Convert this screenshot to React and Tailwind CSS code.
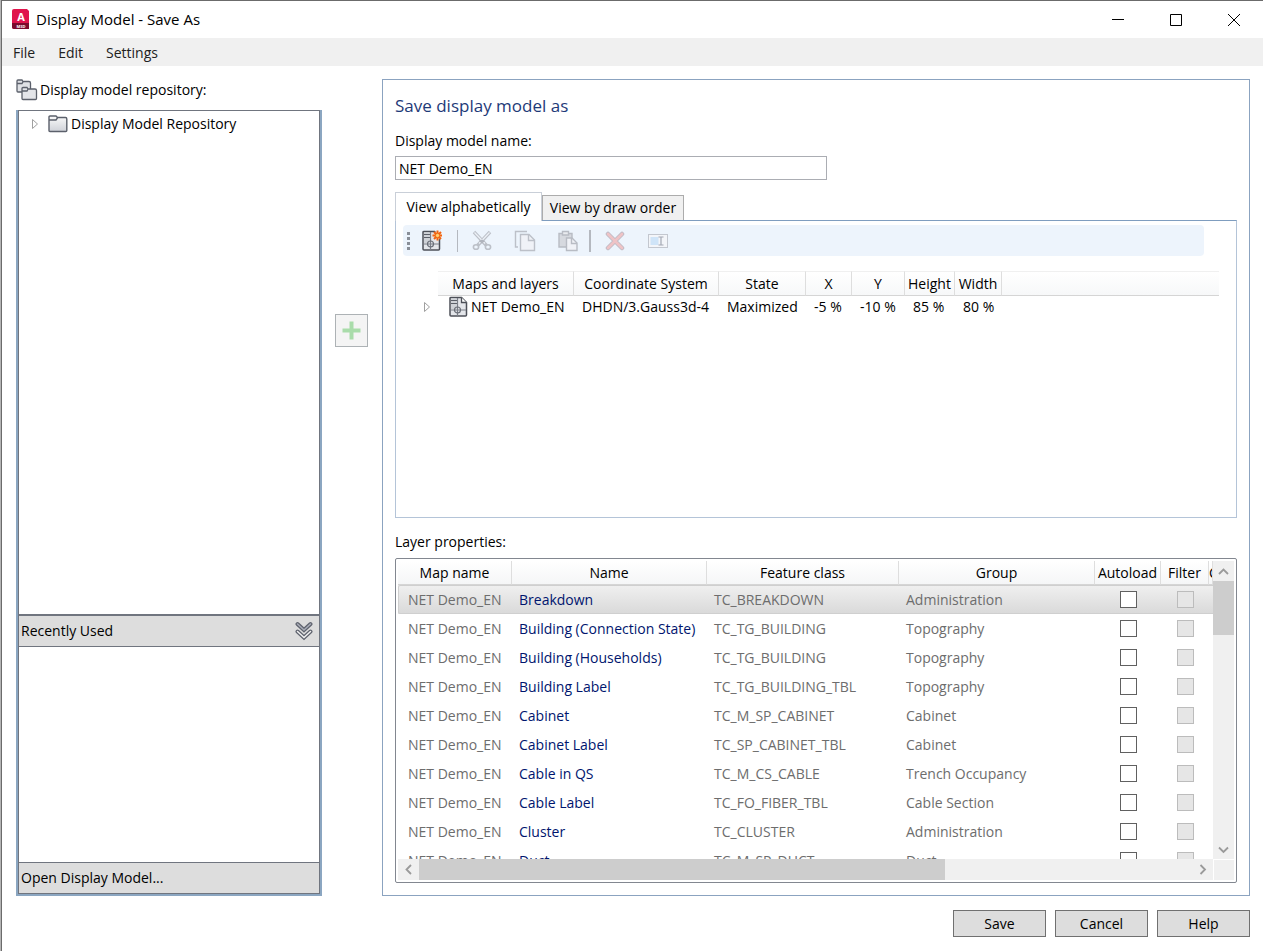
import React from 'react';

const mapColumns = ['Maps and layers', 'Coordinate System', 'State', 'X', 'Y', 'Height', 'Width'];

const layers = [
  ['Breakdown', 'TC_BREAKDOWN', 'Administration'],
  ['Building (Connection State)', 'TC_TG_BUILDING', 'Topography'],
  ['Building (Households)', 'TC_TG_BUILDING', 'Topography'],
  ['Building Label', 'TC_TG_BUILDING_TBL', 'Topography'],
  ['Cabinet', 'TC_M_SP_CABINET', 'Cabinet'],
  ['Cabinet Label', 'TC_SP_CABINET_TBL', 'Cabinet'],
  ['Cable in QS', 'TC_M_CS_CABLE', 'Trench Occupancy'],
  ['Cable Label', 'TC_FO_FIBER_TBL', 'Cable Section'],
  ['Cluster', 'TC_CLUSTER', 'Administration'],
  ['Duct', 'TC_M_SP_DUCT', 'Duct'],
];

const Expander = () => (
  <svg className="block" width="8" height="12" viewBox="0 0 8 12" fill="#fff" stroke="#a0a0a0">
    <path d="M1.5 1.5 L6.5 6 L1.5 10.5 Z" />
  </svg>
);

const Folder = () => (
  <svg className="shrink-0" width="20" height="18" viewBox="0 0 20 18">
    <defs>
      <linearGradient id="folder" x1="0" y1="0" x2="0" y2="1">
        <stop offset="0" stopColor="#fafafa" />
        <stop offset="1" stopColor="#cfd2d8" />
      </linearGradient>
    </defs>
    <path d="M1 15.5 V2 Q1 1 2 1 H8 L9.5 2.5 H17.5 Q18.8 2.5 18.8 4 V15.5 Q18.8 16.5 17.8 16.5 H2 Q1 16.5 1 15.5 Z" fill="url(#folder)" stroke="#5b606b" strokeWidth="1.4" />
    <path d="M1 5 H8 L9.5 2.8" fill="none" stroke="#5b606b" strokeWidth="1.4" />
  </svg>
);

const Folders = () => (
  <svg className="shrink-0" width="22" height="22" viewBox="0 0 22 22" stroke="#5b606b" strokeWidth="1.3">
    <path d="M1 12 V2 Q1 1 2 1 H6 L7 2.5 H13 Q14.5 2.5 14.5 4 V13 H2 Q1 13 1 12 Z" fill="#dfe1e5" />
    <path d="M1 4.5 H6 L7 2.7" fill="none" />
    <path d="M6 19.5 V9.5 Q6 8.5 7 8.5 H11 L12 10 H19 Q20.5 10 20.5 11.5 V19.5 Q20.5 20.5 19.5 20.5 H7 Q6 20.5 6 19.5 Z" fill="#e3e5e9" />
    <path d="M6 12 H11 L12 10.2" fill="none" />
  </svg>
);

const MapSheet = ({ fresh = false }) => (
  <svg className="shrink-0" width="20" height="22" viewBox="0 0 20 22" fill="none">
    <path d="M1 2 Q1 1.5 2 1.5 H12.5 L17.5 6.5 V19 Q17.5 20 16.5 20 H2 Q1 20 1 19 Z" fill="#e4e6ea" stroke="#4d5058" strokeWidth="1.5" />
    <path d="M2 2.5 H7.5 V13 H2 Z" fill="#cfd2d7" />
    {!fresh && <path d="M12.5 1.5 V6.5 H17.5" fill="#fff" stroke="#4d5058" strokeWidth="1.3" />}
    <path d="M2 4.5 H8 M2 7.5 H8" stroke="#5b5f68" />
    <path d="M8.5 2 V20 M2 14 H17" stroke="#7b7f88" strokeWidth="1.2" />
    <circle cx="8.5" cy="14" r="3" stroke="#6b6f78" strokeWidth="1.2" />
    {fresh && (
      <g>
        <circle cx="15.5" cy="5.5" r="4" fill="#ffe3cc" />
        <path d="M15.5 0.5 V10.5 M10.5 5.5 H20 M12 2 L19 9 M19 2 L12 9" stroke="#ef6412" strokeWidth="2" />
        <circle cx="15.5" cy="5.5" r="2.2" fill="#ffd070" stroke="#ef6412" />
      </g>
    )}
  </svg>
);

const Cut = () => (
  <svg width="20" height="22" viewBox="0 0 20 22" fill="none" stroke="#bcc0c8">
    <path d="M2 2 L14.5 15.5 M18 2 L5.5 15.5" strokeWidth="3.4" />
    <path d="M2.5 2.5 L13 13.5 M17.5 2.5 L7 13.5" stroke="#edf1f7" strokeWidth="1.2" />
    <path d="M7 11 L10 9.5 L13 11 L10 13.5 Z" fill="#b0b4bd" stroke="none" />
    <ellipse cx="4" cy="17" rx="2.6" ry="2.3" strokeWidth="1.6" />
    <ellipse cx="16" cy="17" rx="2.6" ry="2.3" strokeWidth="1.6" />
  </svg>
);

const Copy = () => (
  <svg width="22" height="22" viewBox="0 0 22 22" fill="none" stroke="#bcc0c8" strokeWidth="1.4">
    <path d="M4 17 H1.5 V1.5 H13" />
    <path d="M6.5 4.5 H15 L20.5 10 V20.5 H6.5 Z" fill="#f0f2f7" />
    <path d="M14.5 4.5 V10.5 H20.5" />
  </svg>
);

const Paste = () => (
  <svg width="20" height="22" viewBox="0 0 20 22" fill="none" stroke="#b8bcc4" strokeWidth="1.4">
    <path d="M1 3.500 H14 V17 H1 Z" fill="#d6d9df" />
    <path d="M4.5 1.5 H10.5 V5 H4.5 Z" fill="#e9ebef" />
    <path d="M8.5 8 H14 L19 13 V20.5 H8.5 Z" fill="#f0f2f7" />
    <path d="M13.5 8 V13.5 H19" />
  </svg>
);

const Delete = () => (
  <svg width="20" height="20" viewBox="0 0 20 20" fill="none" strokeLinecap="round">
    <path d="M3 3 L17 17 M17 3 L3 17" stroke="#c0bcc6" strokeWidth="4.5" />
    <path d="M3 3 L17 17 M17 3 L3 17" stroke="#efc3c6" strokeWidth="2.6" />
  </svg>
);

const Rename = () => (
  <svg width="20" height="16" viewBox="0 0 20 16" fill="none">
    <rect x="0.5" y="1.5" width="19" height="13" fill="#f3f5f9" stroke="#c3c7cf" />
    <rect x="2.5" y="4" width="8" height="8" fill="#cfe4f8" />
    <path d="M10.5 4 H15.5 M10.5 12 H15.5 M13 4 V12" stroke="#a3a8b3" strokeWidth="1.2" />
  </svg>
);

const Chevron = ({ d }) => (
  <svg width="11" height="11" viewBox="0 0 11 11" fill="none" stroke="#9a9a9a" strokeWidth="1.8">
    <path d={d} />
  </svg>
);

const ToolButton = ({ label, disabled = true, children }) => (
  <button type="button" aria-label={label} disabled={disabled} className="flex w-[43px] items-center justify-center">
    {children}
  </button>
);

const TitleBar = () => (
  <header className="flex h-[37px] items-center justify-between bg-white">
    <div className="flex items-center gap-1.5 pl-[9px]">
      <svg width="19" height="20" viewBox="0 0 19 20">
        <path d="M1 2 Q1 0 3 0 H16 L18 2 V20 H3 Q1 20 1 18 Z" fill="#e0144c" />
        <path d="M1 14 H18 V20 H3 Q1 20 1 18 Z" fill="#7c0a2c" />
        <text x="10" y="11.5" fontSize="11" fontWeight="700" fill="#fff" textAnchor="middle">A</text>
        <text x="10" y="18.5" fontSize="4" fontWeight="700" fill="#fff" textAnchor="middle">M3D</text>
      </svg>
      <h1 className="text-[15px]">Display Model - Save As</h1>
    </div>
    <div className="flex">
      <button type="button" aria-label="Minimize" className="flex h-9 w-[58px] items-center justify-center">
        <svg width="12" height="12" viewBox="0 0 12 12" stroke="#000"><path d="M0 5.5 H12" /></svg>
      </button>
      <button type="button" aria-label="Maximize" className="flex h-9 w-[58px] items-center justify-center">
        <svg width="12" height="12" viewBox="0 0 12 12" stroke="#000" fill="none"><path d="M0.5 0.5 H11.5 V11.5 H0.5 Z" /></svg>
      </button>
      <button type="button" aria-label="Close" className="flex h-9 w-[58px] items-center justify-center">
        <svg width="12" height="12" viewBox="0 0 12 12" stroke="#000"><path d="M0 0 L12 12 M12 0 L0 12" /></svg>
      </button>
    </div>
  </header>
);

const RepositoryPanel = () => (
  <section className="flex w-[306px] shrink-0 flex-col">
    <h2 className="flex h-[22px] items-center gap-0.5">
      <Folders />
      Display model repository:
    </h2>
    <div className="mt-[9px] flex flex-1 flex-col border-x-2 border-b-2 border-[#8ba6c1]">
      <div className="flex-1 border border-[#70757f] pl-3">
        <div className="flex h-[25px] items-center">
          <button type="button" aria-label="Expand"><Expander /></button>
          <span className="ml-[9px] flex items-center gap-[3px]">
            <Folder />
            Display Model Repository
          </span>
        </div>
      </div>
      <button type="button" className="flex h-8 items-center justify-between border border-[#70757f] bg-[#dddddd] pl-0.5 pr-1.5">
        Recently Used
        <svg width="18" height="20" viewBox="0 0 18 20" fill="none" strokeLinecap="round">
          <path d="M2.5 3 L9 9 L15.5 3" stroke="#5f636e" strokeWidth="4" />
          <path d="M2.5 3 L9 9 L15.5 3" stroke="#a9adb8" strokeWidth="1.5" />
          <path d="M2.5 10.5 L9 16.5 L15.5 10.5" stroke="#5f636e" strokeWidth="4" />
          <path d="M2.5 10.5 L9 16.5 L15.5 10.5" stroke="#f0f0f0" strokeWidth="1.5" />
        </svg>
      </button>
      <div className="h-[215px] border-x border-[#70757f]" />
      <button type="button" className="h-8 border border-[#70757f] bg-[#dddddd] pl-0.5 text-left">
        Open Display Model...
      </button>
    </div>
  </section>
);

const MapTable = () => (
  <div className="pl-6 pr-[17px] pt-[15px]">
    <table className="w-full table-fixed border-separate border-spacing-0">
      <colgroup>
        <col className="w-[18px]" />
        <col className="w-[136px]" />
        <col className="w-[145px]" />
        <col className="w-[87px]" />
        <col className="w-[46px]" />
        <col className="w-[53px]" />
        <col className="w-[50px]" />
        <col className="w-[47px]" />
        <col />
      </colgroup>
      <thead>
        <tr className="h-[25px]">
          <td />
          {mapColumns.map((name) => (
            <th key={name} className="border-b border-r border-t border-b-[#d5d5d5] border-r-[#dedede] border-t-[#f0f0f0] bg-linear-to-b from-white to-[#f7f8f9] font-normal">
              {name}
            </th>
          ))}
          <td className="border-b border-t border-b-[#d5d5d5] border-t-[#f0f0f0] bg-linear-to-b from-white to-[#f7f8f9]" />
        </tr>
      </thead>
      <tbody>
        <tr className="h-[22px] whitespace-nowrap">
          <td><button type="button" aria-label="Expand" className="ml-[3px] block"><Expander /></button></td>
          <td>
            <span className="flex items-center gap-0.5 pl-[11px]">
              <MapSheet />
              NET Demo_EN
            </span>
          </td>
          <td className="pl-2">DHDN/3.Gauss3d-4</td>
          <td className="pl-2">Maximized</td>
          <td className="pl-2">-5 %</td>
          <td className="pl-2">-10 %</td>
          <td className="pl-2">85 %</td>
          <td className="pl-2">80 %</td>
          <td />
        </tr>
      </tbody>
    </table>
  </div>
);

const LayerTable = () => (
  <div className="flex h-[325px] flex-col rounded-xs border border-[#828790] p-0.5">
    <div className="flex min-h-0 flex-1">
      <div className="min-w-0 flex-1 overflow-hidden">
        <table className="w-full table-fixed border-separate border-spacing-0 whitespace-nowrap">
          <colgroup>
            <col className="w-[114px]" />
            <col className="w-[195px]" />
            <col className="w-[192px]" />
            <col />
            <col className="w-[66px]" />
            <col className="w-[48px]" />
            <col className="w-[4px]" />
          </colgroup>
          <thead>
            <tr className="h-6">
              {['Map name', 'Name', 'Feature class', 'Group', 'Autoload', 'Filter', 'C'].map((name) => (
                <th key={name} className="overflow-hidden border-b border-r border-b-[#d5d5d5] border-r-[#dedede] bg-linear-to-b from-white to-[#f5f6f7] p-0 font-normal">
                  {name}
                </th>
              ))}
            </tr>
          </thead>
          <tbody>
            {layers.map(([name, featureClass, group], i) => (
              <tr key={name} className={i === 0 ? 'h-[29px] bg-linear-to-b from-[#f0f0f0] to-[#d9d9d9] text-[#6d6d6d]' : 'h-[29px] text-[#6d6d6d]'}>
                <td className={i === 0 ? 'rounded-l-xs border-y border-l border-[#cfcfcf] p-0 pl-[9px]' : 'p-0 pl-2.5'}>NET Demo_EN</td>
                <td className={i === 0 ? 'border-y border-[#cfcfcf] p-0 pl-[7px] text-[#00156e]' : 'p-0 pl-[7px] text-[#00156e]'}>{name}</td>
                <td className={i === 0 ? 'border-y border-[#cfcfcf] p-0 pl-[7px]' : 'p-0 pl-[7px]'}>{featureClass}</td>
                <td className={i === 0 ? 'border-y border-[#cfcfcf] p-0 pl-[7px]' : 'p-0 pl-[7px]'}>{group}</td>
                <td className={i === 0 ? 'border-y border-[#cfcfcf] p-0' : 'p-0'}>
                  <input type="checkbox" aria-label={`Autoload ${name}`} className="mx-auto block size-[17px] appearance-none border border-[#606060] bg-white" />
                </td>
                <td className={i === 0 ? 'border-y border-[#cfcfcf] p-0' : 'p-0'}>
                  <input type="checkbox" disabled aria-label={`Filter ${name}`} className="mx-auto block size-[17px] appearance-none border border-[#bcbcbc] bg-[#e6e6e6]" />
                </td>
                <td className={i === 0 ? 'border-y border-[#cfcfcf] p-0' : 'p-0'} />
              </tr>
            ))}
          </tbody>
        </table>
      </div>
      <div className="flex w-[21px] flex-col bg-[#f0f0f0]">
        <button type="button" aria-label="Scroll up" className="flex h-5 items-center justify-center">
          <Chevron d="M1 8 L5.500 3.500 L10 8" />
        </button>
        <div className="h-[54px] bg-[#cdcdcd]" />
        <button type="button" aria-label="Scroll down" className="mt-auto flex h-5 items-center justify-center">
          <Chevron d="M1 3.500 L5.500 8 L10 3.500" />
        </button>
      </div>
    </div>
    <div className="flex h-[21px] bg-[#f0f0f0]">
      <button type="button" aria-label="Scroll left" className="flex w-[21px] items-center justify-center">
        <Chevron d="M8 1 L3.500 5.500 L8 10" />
      </button>
      <div className="flex-1">
        <div className="h-full w-[68%] bg-[#cdcdcd]" />
      </div>
      <button type="button" aria-label="Scroll right" className="flex w-[21px] items-center justify-center">
        <Chevron d="M3.500 1 L8 5.500 L3.500 10" />
      </button>
      <div className="w-[21px] border-l border-t border-white" />
    </div>
  </div>
);

const ModelPanel = () => (
  <section className="flex min-w-0 flex-1 flex-col border border-[#8ba3c0] px-3 pb-3">
    <h2 className="mt-[14px] text-[17px] leading-6 text-[#1e3a78]">Save display model as</h2>
    <label htmlFor="model-name" className="mt-[13px] leading-5">Display model name:</label>
    <input id="model-name" defaultValue="NET Demo_EN" className="mt-[5px] h-6 w-[432px] border border-[#abadb3] px-[3px] outline-none" />
    <div role="tablist" className="mt-3 flex items-end">
      <button type="button" role="tab" aria-selected="true" className="z-10 -mb-px h-[29px] w-[147px] border border-b-0 border-[#c9cfd8] bg-white">
        View alphabetically
      </button>
      <button type="button" role="tab" aria-selected="false" className="h-[25px] w-[142px] border border-b-0 border-[#acacac] bg-[#f0f0f0]">
        View by draw order
      </button>
    </div>
    <div role="tabpanel" className="flex-1 border border-[#b4c4d8] border-t-[#7f9dbf]">
      <div role="toolbar" className="ml-[7px] mr-8 mt-1 flex h-[31px] items-center rounded bg-[#edf4fc]">
        <svg className="ml-1" width="3" height="18" viewBox="0 0 3 18" fill="#8a8f98">
          <path d="M0 0 H3 V3 H0 Z M0 5 H3 V8 H0 Z M0 10 H3 V13 H0 Z M0 15 H3 V18 H0 Z" />
        </svg>
        <ToolButton label="New map" disabled={false}><MapSheet fresh /></ToolButton>
        <div className="ml-1 mr-0.5 h-[22px] w-px bg-[#b4b8bf]" />
        <ToolButton label="Cut"><Cut /></ToolButton>
        <ToolButton label="Copy"><Copy /></ToolButton>
        <ToolButton label="Paste"><Paste /></ToolButton>
        <div className="mr-0.5 h-[22px] w-0.5 bg-[#b4b8bf]" />
        <ToolButton label="Delete"><Delete /></ToolButton>
        <ToolButton label="Rename"><Rename /></ToolButton>
      </div>
      <MapTable />
    </div>
    <h3 className="mb-1.5 mt-[14px] leading-5">Layer properties:</h3>
    <LayerTable />
  </section>
);

const App = () => {
  return (
    <div className="min-h-screen bg-[#b5b5b5] pl-px font-['Open_Sans',sans-serif] text-sm text-black">
      <div className="flex min-h-screen flex-col border-l border-t border-[#6b6b6b] bg-white">
        <TitleBar />
        <nav className="flex h-7 items-center gap-[23px] bg-[#f0f0f0] pl-[11px] pt-0.5 text-[#212121]">
          <button type="button">File</button>
          <button type="button">Edit</button>
          <button type="button">Settings</button>
        </nav>
        <main className="flex flex-1 pl-[14px] pr-[13px] pt-[13px]">
          <RepositoryPanel />
          <button type="button" disabled aria-label="Add" className="ml-[13px] mr-[14px] mt-[235px] flex size-[33px] shrink-0 items-center justify-center border border-[#adb2b5] bg-[#f4f4f4]">
            <svg width="20" height="20" viewBox="0 0 20 20"><path d="M9.5 0.5 V18.5 M0.5 9.5 H18.5" stroke="#a9dcaa" strokeWidth="4" /></svg>
          </button>
          <ModelPanel />
        </main>
        <footer className="flex justify-end gap-[9px] py-[14px] pr-[13px]">
          <button type="button" className="h-[27px] w-[93px] border border-[#707070] bg-[#dddddd]">Save</button>
          <button type="button" className="h-[27px] w-[93px] border border-[#707070] bg-[#dddddd]">Cancel</button>
          <button type="button" className="h-[27px] w-[93px] border border-[#707070] bg-[#dddddd]">Help</button>
        </footer>
      </div>
    </div>
  );
};

export default App;
